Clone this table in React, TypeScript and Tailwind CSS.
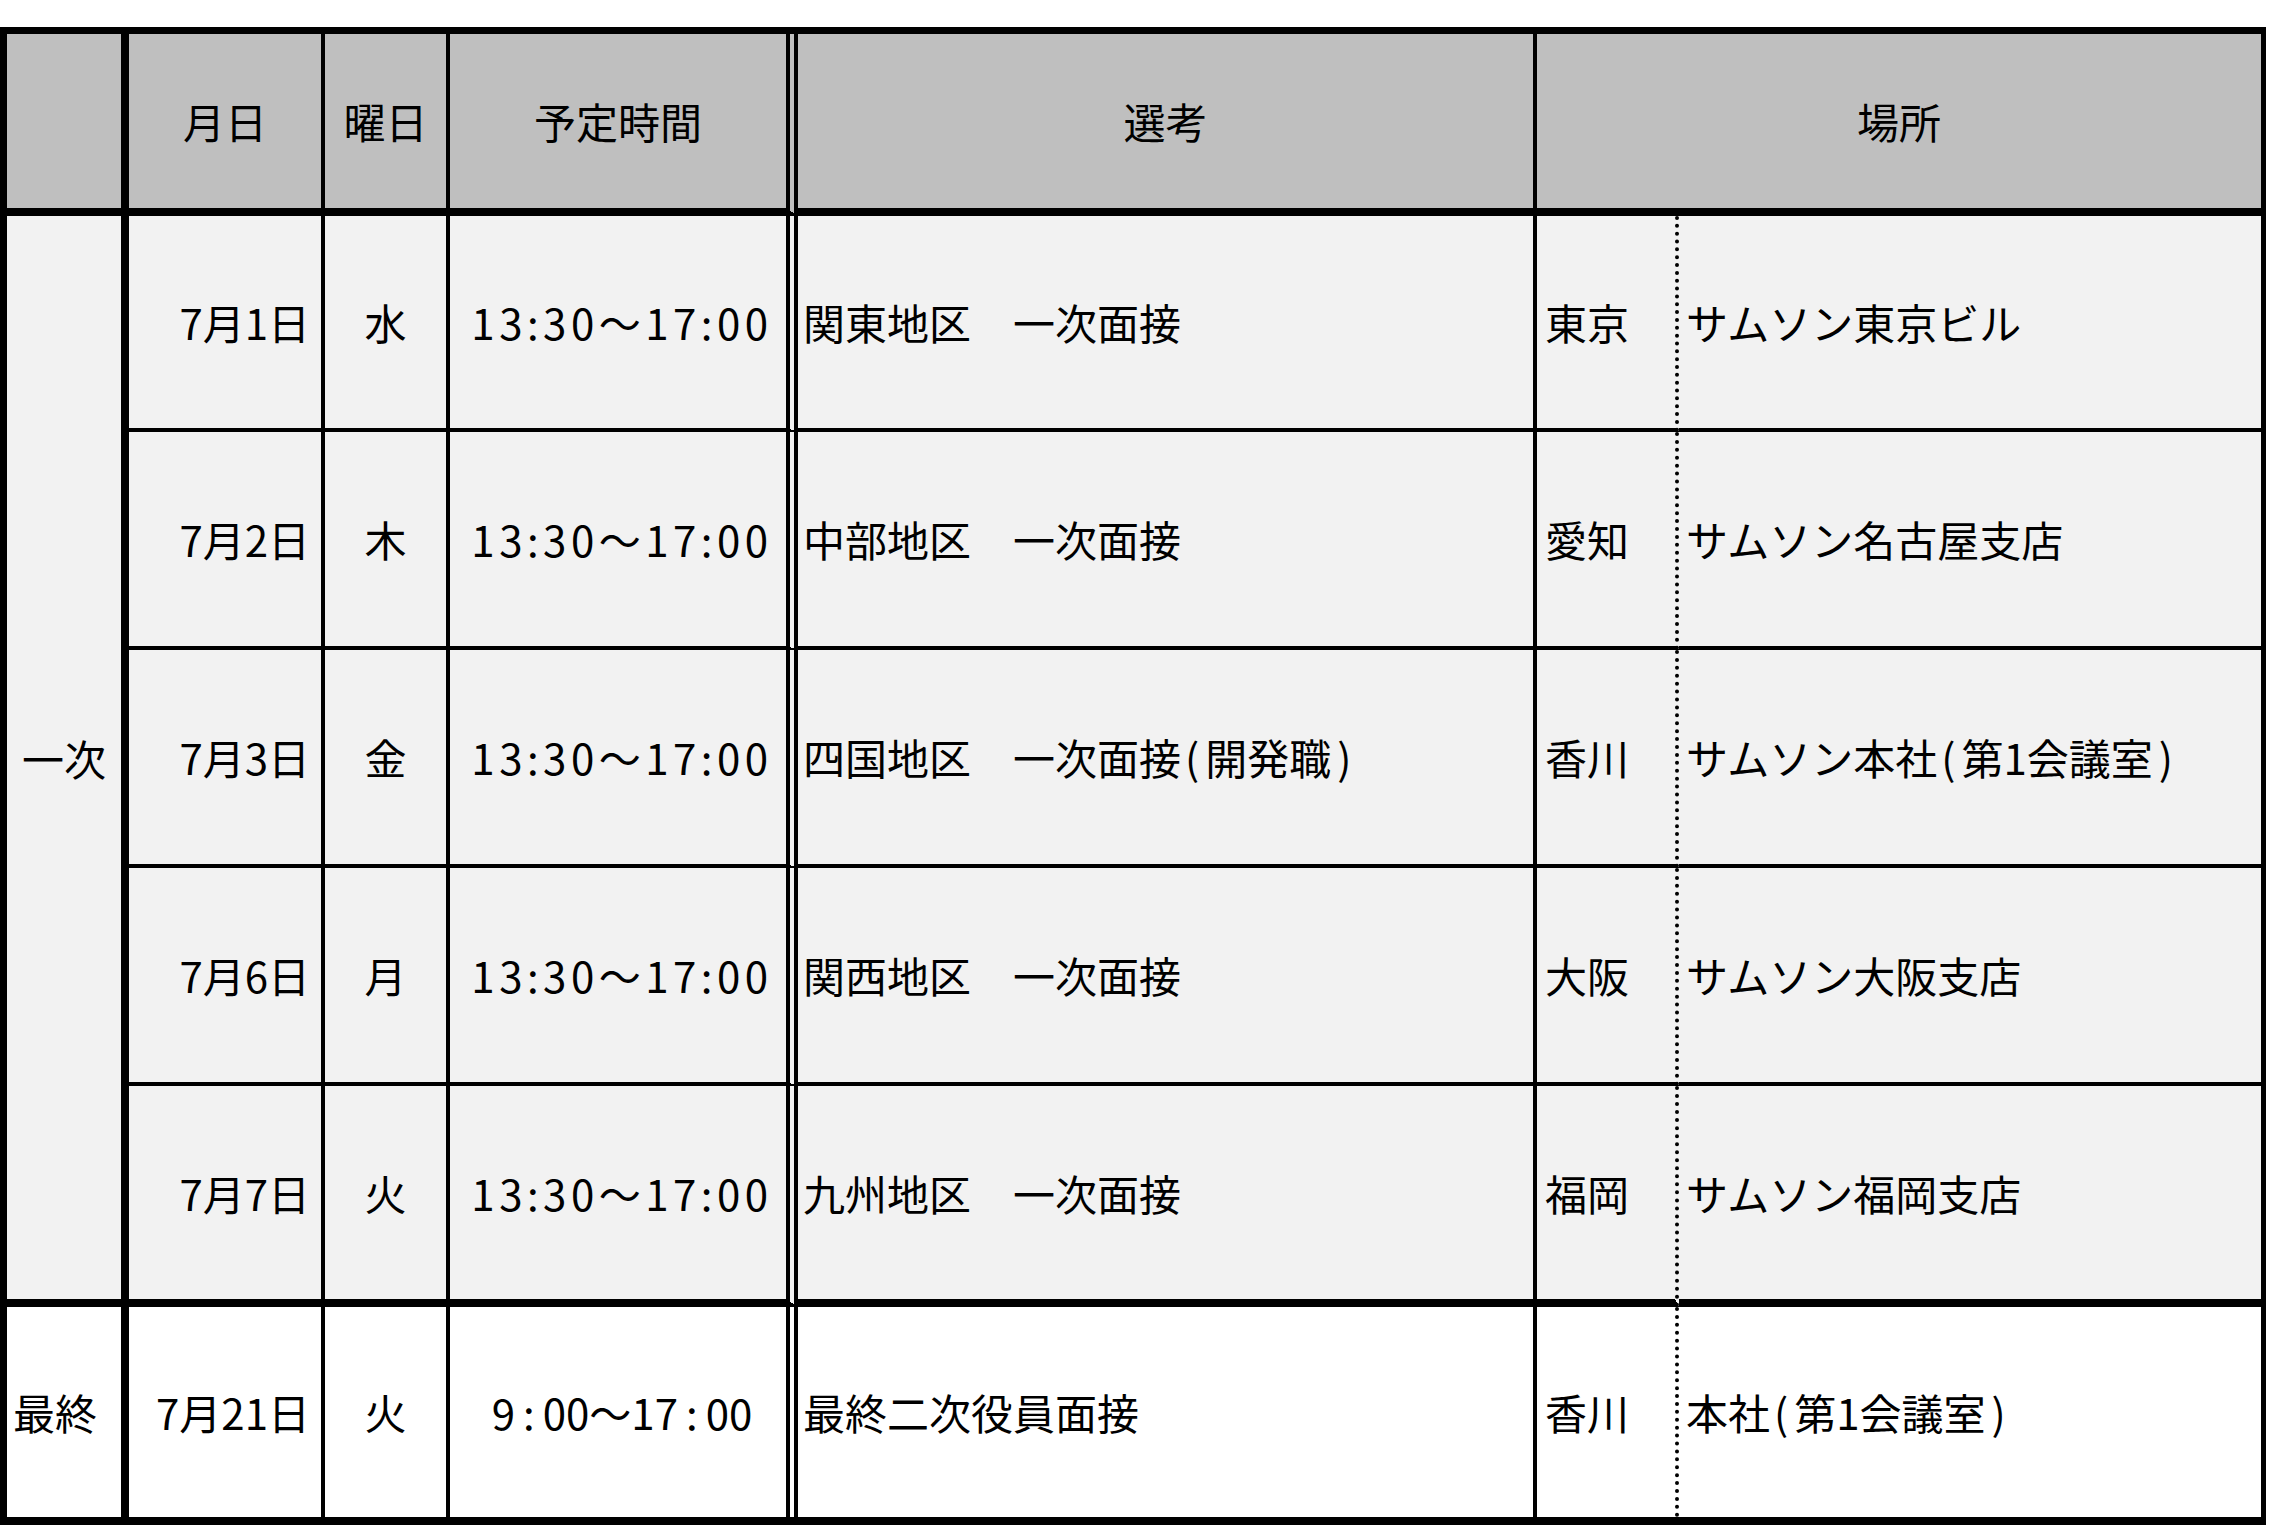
const font = "font-['Noto_Sans_CJK_JP','Noto_Sans_CJK_SC',sans-serif]";

const Paren = ({ children }: { children: React.ReactNode }) => (
  <>
    <span className="ml-[4px] mr-[6px]">(</span>
    {children}
    <span className="ml-[6px] mr-[4px]">)</span>
  </>
);

type Row = {
  date: string;
  day: string;
  sel: React.ReactNode;
  pref: string;
  place: React.ReactNode;
};

const rows: Row[] = [
  { date: "7月1日", day: "水", sel: "関東地区　一次面接", pref: "東京", place: "サムソン東京ビル" },
  { date: "7月2日", day: "木", sel: "中部地区　一次面接", pref: "愛知", place: "サムソン名古屋支店" },
  {
    date: "7月3日",
    day: "金",
    sel: (
      <>
        四国地区　一次面接<Paren>開発職</Paren>
      </>
    ),
    pref: "香川",
    place: (
      <>
        サムソン本社<Paren>第1会議室</Paren>
      </>
    ),
  },
  { date: "7月6日", day: "月", sel: "関西地区　一次面接", pref: "大阪", place: "サムソン大阪支店" },
  { date: "7月7日", day: "火", sel: "九州地区　一次面接", pref: "福岡", place: "サムソン福岡支店" },
];

const cell = "flex items-center border-black whitespace-nowrap";

export default function App() {
  return (
    <div className={`bg-white pt-[27px] text-black text-[42px] leading-none ${font}`}>
      <div className="w-[2266px] grid grid-cols-[122px_196px_125px_348px_739px_142px_582px] grid-rows-[182px_216px_218px_218px_218px_221px_210px] border-black border-t-[7px] border-l-[7px] border-r-[5px] border-b-[8px]">
        {/* header */}
        <div className={`${cell} bg-[#bfbfbf] border-r-[8px] border-b-[8px]`} />
        <div className={`${cell} bg-[#bfbfbf] justify-center border-r-[4px] border-b-[8px]`}>月日</div>
        <div className={`${cell} bg-[#bfbfbf] justify-center border-r-[4px] border-b-[8px]`}>曜日</div>
        <div className={`${cell} bg-[#bfbfbf] justify-center border-r-[12px] [border-right-style:double] border-b-[8px]`}>
          予定時間
        </div>
        <div className={`${cell} bg-[#bfbfbf] justify-center border-r-[4px] border-b-[8px]`}>選考</div>
        <div className={`${cell} bg-[#bfbfbf] justify-center col-span-2 border-b-[8px]`}>場所</div>

        {/* first round */}
        <div className={`${cell} bg-[#f2f2f2] row-span-5 justify-center border-r-[8px] border-b-[8px]`}>一次</div>
        {rows.map((r, i) => {
          const b = i === rows.length - 1 ? "border-b-[8px]" : "border-b-[4px]";
          return (
            <div key={r.date} className="contents">
              <div className={`${cell} bg-[#f2f2f2] justify-end pr-[11px] border-r-[4px] ${b}`}>{r.date}</div>
              <div className={`${cell} bg-[#f2f2f2] justify-center border-r-[4px] ${b}`}>{r.day}</div>
              <div
                className={`${cell} bg-[#f2f2f2] justify-center pl-[8px] tracking-[4.5px] border-r-[12px] [border-right-style:double] ${b}`}
              >
                13:30〜17:00
              </div>
              <div className={`${cell} bg-[#f2f2f2] pl-[5px] border-r-[4px] ${b}`}>{r.sel}</div>
              <div className={`${cell} bg-[#f2f2f2] pl-[8px] border-r-[4px] [border-right-style:dotted] ${b}`}>
                {r.pref}
              </div>
              <div className={`${cell} bg-[#f2f2f2] pl-[7px] ${b}`}>{r.place}</div>
            </div>
          );
        })}

        {/* final */}
        <div className={`${cell} pl-[6px] border-r-[8px]`}>最終</div>
        <div className={`${cell} justify-end pr-[11px] border-r-[4px]`}>7月21日</div>
        <div className={`${cell} justify-center border-r-[4px]`}>火</div>
        <div className={`${cell} justify-center pl-[8px] border-r-[12px] [border-right-style:double]`}>
          9<span className="mx-[8px]">:</span>00〜17<span className="mx-[8px]">:</span>00
        </div>
        <div className={`${cell} pl-[5px] border-r-[4px]`}>最終二次役員面接</div>
        <div className={`${cell} pl-[8px] border-r-[4px] [border-right-style:dotted]`}>香川</div>
        <div className={`${cell} pl-[7px]`}>
          本社<Paren>第1会議室</Paren>
        </div>
      </div>
    </div>
  );
}
